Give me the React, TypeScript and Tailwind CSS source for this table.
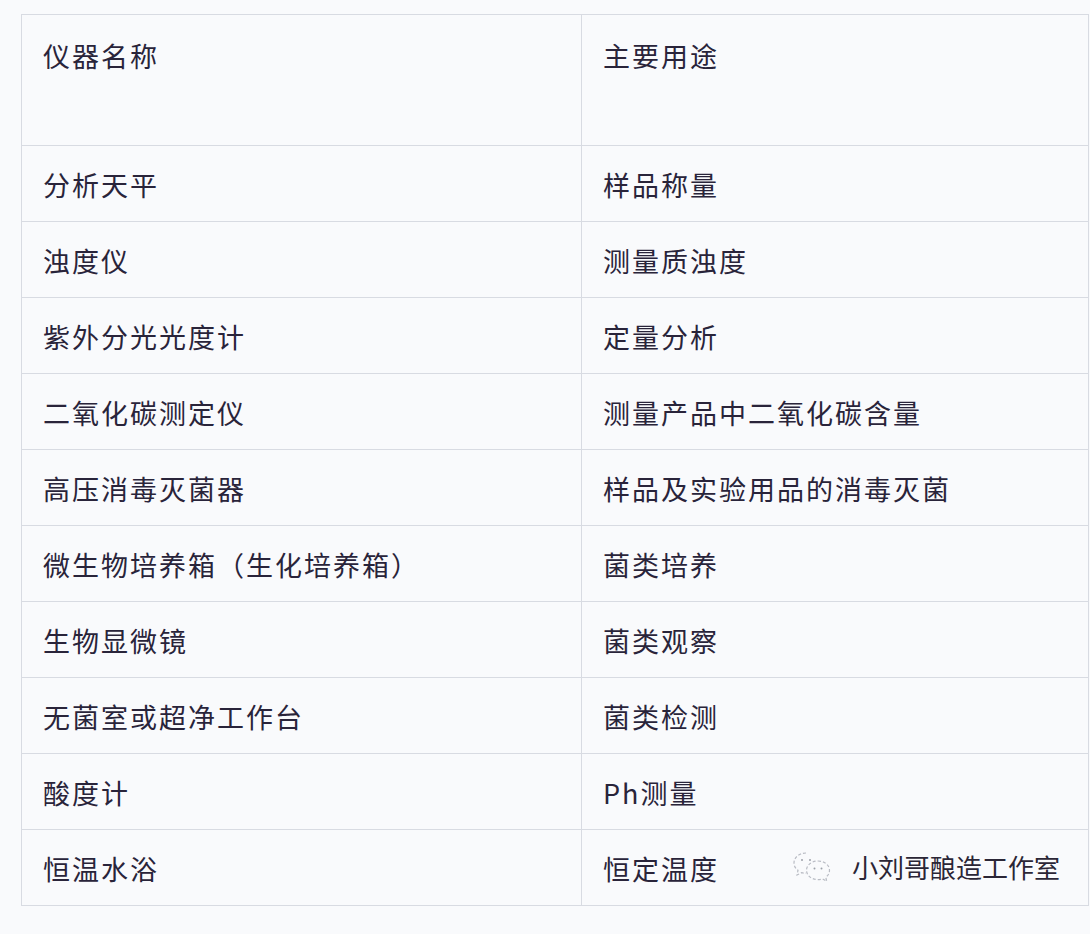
import React from 'react';

const rows: [string, string][] = [
  ['分析天平', '样品称量'],
  ['浊度仪', '测量质浊度'],
  ['紫外分光光度计', '定量分析'],
  ['二氧化碳测定仪', '测量产品中二氧化碳含量'],
  ['高压消毒灭菌器', '样品及实验用品的消毒灭菌'],
  ['微生物培养箱（生化培养箱）', '菌类培养'],
  ['生物显微镜', '菌类观察'],
  ['无菌室或超净工作台', '菌类检测'],
  ['酸度计', 'Ph测量'],
  ['恒温水浴', '恒定温度'],
];

const font = { fontFamily: '"Noto Sans CJK SC", "Noto Sans", sans-serif' };

const WeChatMark = () => (
  <svg width="44" height="36" viewBox="0 0 44 36" fill="none" stroke="#b9bcc4" strokeWidth="1.2" strokeDasharray="3 2">
    <path d="M16 4c-7 0-12 4.5-12 10 0 3 1.5 5.5 4 7.3L7 26l4.6-2.4c1.4.4 2.9.6 4.4.6" />
    <path d="M28 12c6.5 0 11.5 4.2 11.5 9.3 0 2.8-1.4 5.2-3.7 6.9l.9 4-4-2.2c-1.5.4-3 .6-4.7.6-6.5 0-11.5-4.2-11.5-9.3S21.5 12 28 12z" />
    <circle cx="12" cy="11" r="1" fill="#9da1aa" stroke="none" />
    <circle cx="20" cy="11" r="1" fill="#9da1aa" stroke="none" />
    <circle cx="24.5" cy="19.5" r="1" fill="#9da1aa" stroke="none" />
    <circle cx="31.5" cy="19.5" r="1" fill="#9da1aa" stroke="none" />
  </svg>
);

export default function App() {
  return (
    <div className="w-[1090px] h-[934px] bg-[#f9fafc] overflow-hidden pt-[14px] pl-[21px]" style={font}>
      <table className="relative table-fixed border-collapse w-[1068px] text-[27px] tracking-[2px] text-[#29243a]">
        <colgroup>
          <col className="w-[560px]" />
          <col />
        </colgroup>
        <tbody>
          <tr className="h-[131px]">
            <td className="border border-[#d8dbe2] align-top pl-[21px] pt-[22px] leading-[38px]">仪器名称</td>
            <td className="border border-[#d8dbe2] align-top pl-[21px] pt-[22px] leading-[38px]">主要用途</td>
          </tr>
          {rows.map(([a, b], i) => (
            <tr key={i} className="h-[76px]">
              <td className="border border-[#d8dbe2] align-top pl-[21px] pt-[20px] leading-[38px]">{a}</td>
              <td className="relative border border-[#d8dbe2] align-top pl-[21px] pt-[20px] leading-[38px]">
                {b}
                {i === rows.length - 1 && (
                  <div className="absolute left-[208px] top-[18px] flex items-center gap-[18px] whitespace-nowrap">
                    <WeChatMark />
                    <span className="text-[26px] tracking-[0px] text-[#2b2636] [text-shadow:0_0_2px_#fff]">小刘哥酿造工作室</span>
                  </div>
                )}
              </td>
            </tr>
          ))}
        </tbody>
      </table>
    </div>
  );
}
